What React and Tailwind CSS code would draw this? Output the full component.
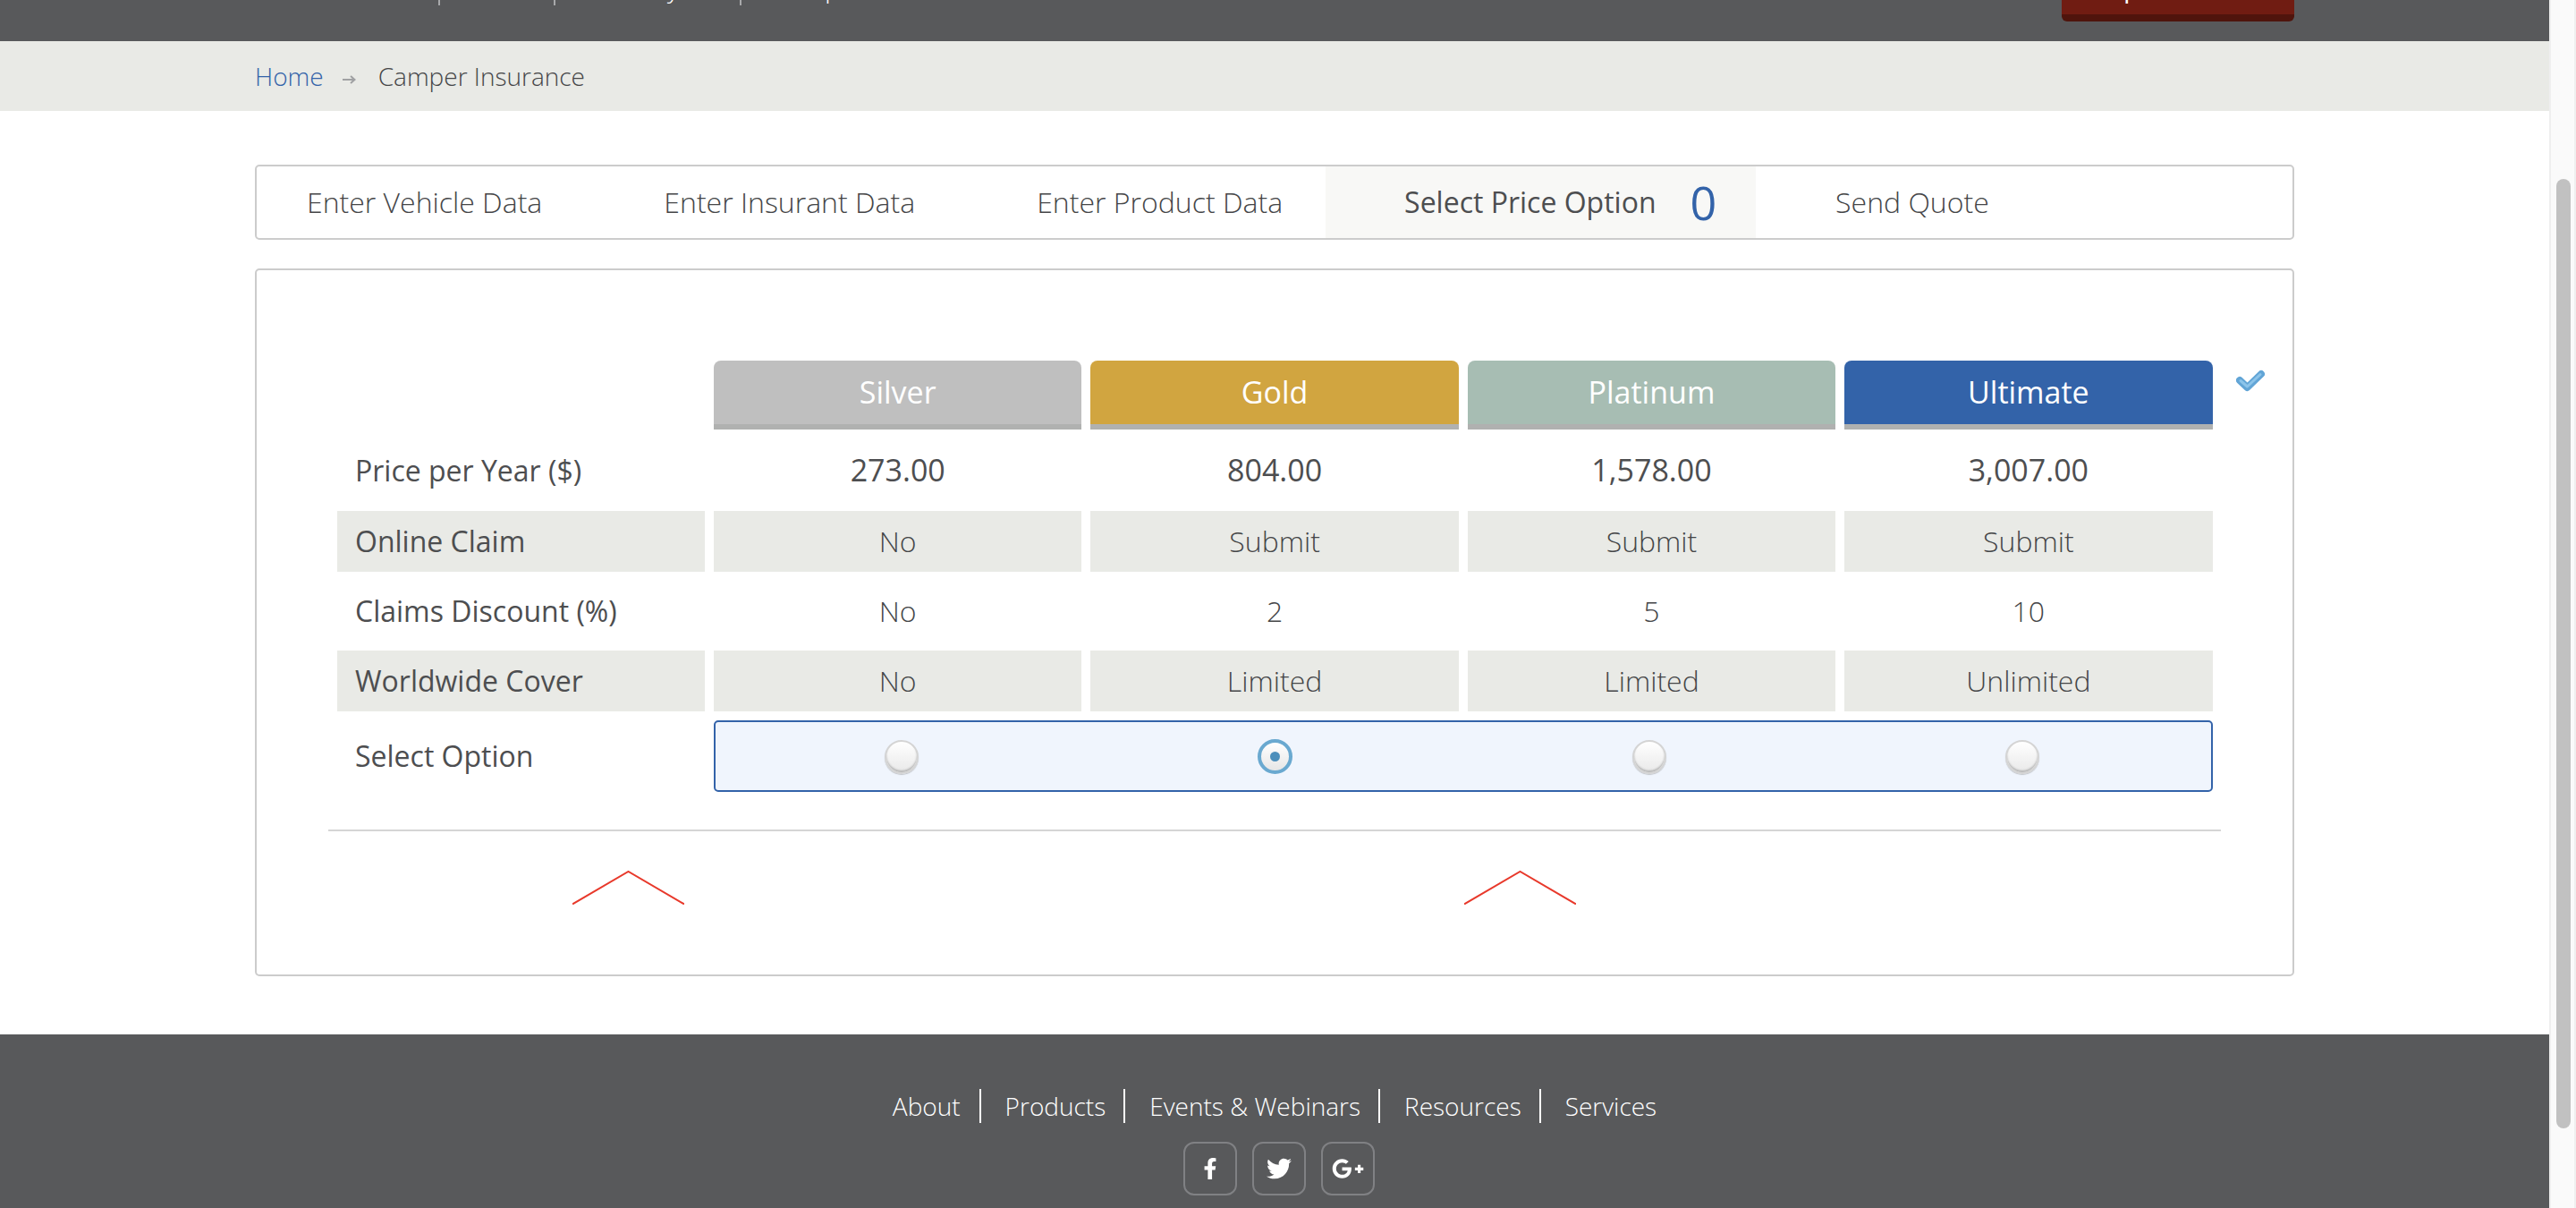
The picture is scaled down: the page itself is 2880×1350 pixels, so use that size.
import React from "react";
import { FaFacebookF, FaTwitter, FaGooglePlusG } from "react-icons/fa";

const plans = [
  { name: "Silver", bg: "bg-[#bfbfbf]", price: "273.00", claim: "No", discount: "No", cover: "No" },
  { name: "Gold", bg: "bg-[#d1a540]", price: "804.00", claim: "Submit", discount: "2", cover: "Limited" },
  { name: "Platinum", bg: "bg-[#a7bdb3]", price: "1,578.00", claim: "Submit", discount: "5", cover: "Limited" },
  { name: "Ultimate", bg: "bg-[#3363a9]", price: "3,007.00", claim: "Submit", discount: "10", cover: "Unlimited" },
];

function Chevron({ className }) {
  return (
    <svg className={className} width="125" height="38" viewBox="0 0 125 38" fill="none">
      <path d="M0 37.5 L62.5 1 L125 37.5" stroke="#e8392b" strokeWidth="2" />
    </svg>
  );
}

function Radio({ checked, className = "" }) {
  if (checked) {
    return (
      <div className={"flex h-[39px] w-[39px] items-center justify-center rounded-full border-[4px] border-[#6aa9d0] bg-linear-to-b from-white to-[#e6e6e6] " + className}>
        <div className="h-[11px] w-[11px] rounded-full bg-[#4d8fbb]" />
      </div>
    );
  }
  return (
    <div className={"h-[38px] w-[38px] rounded-full border-2 border-[#d4d4d4] bg-linear-to-b from-white to-[#e9e9e9] shadow-[inset_0_-2px_2px_rgba(120,120,120,0.45),0_1px_1px_rgba(120,120,120,0.4)] " + className} />
  );
}

function Label({ children, shaded }) {
  return (
    <div className={"flex items-center pl-[20px] text-[32px] text-[#4d4e50] " + (shaded ? "bg-[#e9eae6]" : "")}>{children}</div>
  );
}

function Cell({ children, shaded, strong }) {
  return (
    <div className={"flex items-center justify-center " + (strong ? "text-[34px] font-medium text-[#4d4e50] " : "text-[32px] font-light text-[#454648] ") + (shaded ? "bg-[#e9eae6]" : "")}>
      {children}
    </div>
  );
}

function NavItem({ children, className }) {
  return <div className={"h-[44px] border-r-2 border-[#a8a9ab] leading-[48px] " + className}>{children}</div>;
}

function FooterLink({ children, className }) {
  return <div className={"flex h-[38px] items-center " + className}>{children}</div>;
}

function Social({ children }) {
  return (
    <div className="flex h-[60px] w-[60px] items-center justify-center rounded-[12px] border-2 border-[#808184] text-white">
      {children}
    </div>
  );
}

export default function App() {
  return (
    <div className="flex h-[1350px] w-[2880px] overflow-hidden bg-white font-['Open_Sans',sans-serif]">
      <div className="flex w-[2850px] flex-col">
        <header className="h-[46px] shrink-0 overflow-hidden bg-[#58595b]">
          <div className="ml-[285px] mr-[285px] flex items-start justify-between">
            <div className="-mt-[38px] flex text-[30px] font-light text-white">
              <NavItem className="w-[207px]">Automobile</NavItem>
              <NavItem className="w-[129px] pl-[28px]">Truck</NavItem>
              <NavItem className="w-[208px] pl-[28px]">Motorcycle</NavItem>
              <div className="h-[44px] pl-[32px] leading-[48px]">Camper</div>
            </div>
            <div className="-mt-[38px] flex h-[62px] w-[260px] items-start justify-center rounded-b-[6px] border-b-[8px] border-[#4f140c] bg-[#701c12] pr-[8px] text-[30px] font-normal leading-[48px] text-white">
              Request Demo
            </div>
          </div>
        </header>

        <nav className="flex h-[78px] shrink-0 items-center bg-[#e9eae6] pl-[285px] text-[28px] font-light">
          <span className="text-[#3363a9]">Home</span>
          <svg className="ml-[21px] mr-[25px] mt-[8px]" width="15" height="10" viewBox="0 0 15 10" fill="none">
            <path d="M0 5 H13 M9 1 L13.5 5 L9 9" stroke="#a0a1a3" strokeWidth="2" />
          </svg>
          <span className="text-[#454648]">Camper Insurance</span>
        </nav>

        <main className="ml-[285px] w-[2280px] pt-[60px]">
          <div className="flex h-[84px] items-stretch rounded-[5px] border-2 border-[#cccccc] text-[32px] font-light text-[#454648]">
            <div className="flex items-center pl-[56px] pr-[70px]">Enter Vehicle Data</div>
            <div className="flex items-center pl-[66px] pr-[69px]">Enter Insurant Data</div>
            <div className="flex items-center pl-[67px] pr-[48px]">Enter Product Data</div>
            <div className="flex w-[481px] items-center bg-[#f8f8f6] pl-[88px] font-normal text-[#4d4e50]">
              Select Price Option
              <span className="ml-[38px] text-[52px] font-normal leading-none text-[#3363a9]">0</span>
            </div>
            <div className="flex items-center pl-[89px]">Send Quote</div>
          </div>

          <div className="mt-[32px] flex h-[791px] flex-col rounded-[5px] border-2 border-[#cccccc] pl-[90px] pt-[101px]">
            <div className="relative grid grid-cols-[411px_411.4px_411.4px_411.4px_411.4px] grid-rows-[77px_71px_68px_68px_68px_80px] gap-[10px]">
              <div />
              {plans.map((p) => (
                <div key={p.name} className={"flex items-center justify-center rounded-t-[8px] border-b-[6px] border-[#b0b1b0] text-[34px] font-medium text-white " + p.bg}>
                  {p.name}
                </div>
              ))}
              <Label>Price per Year ($)</Label>
              {plans.map((p) => (<Cell key={p.name} strong>{p.price}</Cell>))}
              <Label shaded>Online Claim</Label>
              {plans.map((p) => (<Cell key={p.name} shaded>{p.claim}</Cell>))}
              <Label>Claims Discount (%)</Label>
              {plans.map((p) => (<Cell key={p.name}>{p.discount}</Cell>))}
              <Label shaded>Worldwide Cover</Label>
              {plans.map((p) => (<Cell key={p.name} shaded>{p.cover}</Cell>))}
              <Label>Select Option</Label>
              <div className="col-span-4 flex items-center rounded-[5px] border-2 border-[#3363a9] bg-[#f0f5fd] pl-[189px] pt-[1px]">
                <Radio />
                <Radio checked className="ml-[379px]" />
                <Radio className="ml-[380px]" />
                <Radio className="ml-[379px]" />
              </div>
              <svg className="absolute left-[2123px] top-[10px]" width="34" height="26" viewBox="0 0 34 26" fill="none">
                <path d="M4 12 L12.5 20 L28 5" stroke="#62a5d6" strokeWidth="8" strokeLinecap="round" strokeLinejoin="round" />
                <path d="M5 12.5 L12.5 19 L27 5.5" stroke="#8cc4ea" strokeWidth="3" strokeLinecap="round" strokeLinejoin="round" />
              </svg>
            </div>
            <div className="-ml-[10px] mt-[42px] h-[2px] w-[2116px] bg-[#d5d5d5]" />
            <div className="flex pt-[44px]">
              <Chevron className="ml-[263px]" />
              <Chevron className="ml-[872px]" />
            </div>
          </div>
        </main>

        <footer className="mt-[65px] flex flex-1 flex-col items-center bg-[#58595b] pt-[61px] text-[28px] font-light text-white">
          <div className="flex">
            <FooterLink className="border-r-2 border-white pr-[21px]">About</FooterLink>
            <FooterLink className="border-r-2 border-white pl-[27px] pr-[20px]">Products</FooterLink>
            <FooterLink className="border-r-2 border-white pl-[27px] pr-[20px]">Events &amp; Webinars</FooterLink>
            <FooterLink className="border-r-2 border-white pl-[27px] pr-[20px]">Resources</FooterLink>
            <FooterLink className="pl-[27px]">Services</FooterLink>
          </div>
          <div className="ml-[9px] mt-[21px] flex gap-[17px]">
            <Social><FaFacebookF size={24} /></Social>
            <Social><FaTwitter size={28} /></Social>
            <Social><FaGooglePlusG size={36} /></Social>
          </div>
        </footer>
      </div>

      <div className="w-[30px] shrink-0 border-x-2 border-[#efefef] bg-[#fafafa] pl-[6px] pt-[200px]">
        <div className="h-[1061px] w-[16px] rounded-full bg-[#c1c1c1]" />
      </div>
    </div>
  );
}
